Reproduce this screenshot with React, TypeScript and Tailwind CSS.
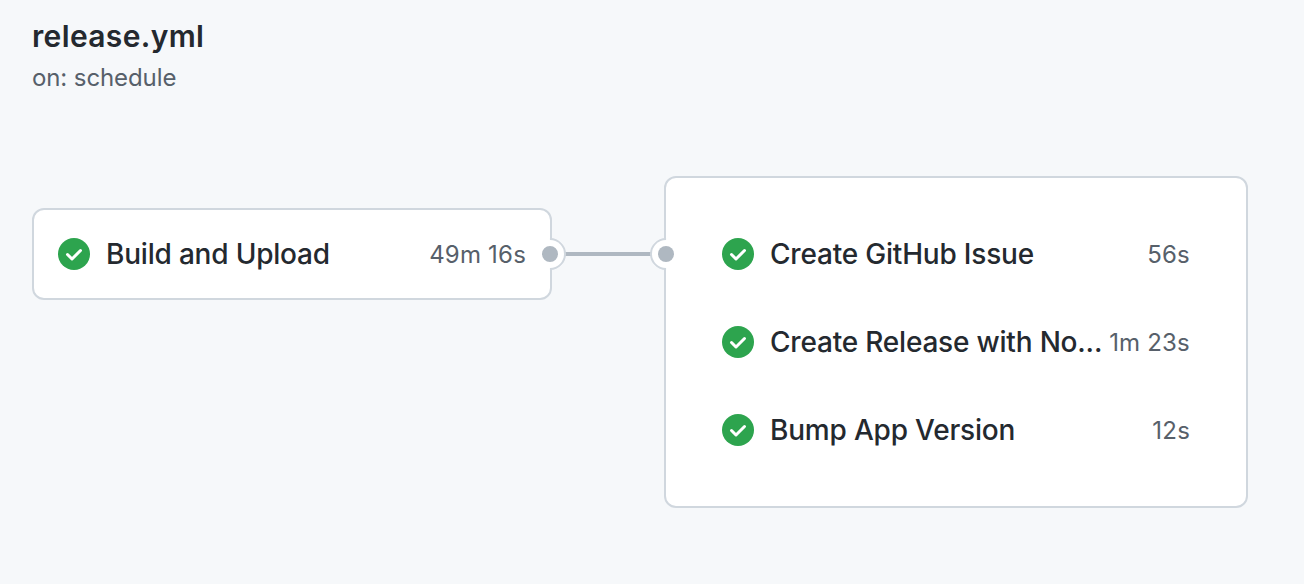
import React from 'react';

const Check = () => (
  <svg viewBox="0 0 32 32" className="w-8 h-8 shrink-0">
    <circle cx="16" cy="16" r="16" fill="#2da44e" />
    <path d="M9.5 16.5l4.5 4.5 8.5-8.5" fill="none" stroke="#fff" strokeWidth="3" strokeLinecap="round" strokeLinejoin="round" />
  </svg>
);

const Job = ({ name, time }: { name: string; time: string }) => (
  <div className="flex items-center justify-between h-12">
    <div className="flex items-center min-w-0">
      <Check />
      <span className="ml-4 whitespace-nowrap text-[28px] font-medium tracking-[-0.2px] text-[#24292f]">{name}</span>
    </div>
    <span className="shrink-0 mt-0.5 text-2xl tracking-[0.2px] text-[#57606a]">{time}</span>
  </div>
);

const OutPort = () => (
  <div className="absolute -right-4 top-[28px] z-10 w-8 h-8 rotate-45 rounded-full bg-white border-2 border-transparent border-t-[#d0d7de] border-r-[#d0d7de] flex items-center justify-center">
    <div className="w-4 h-4 rounded-full bg-[#afb8c1]" />
  </div>
);

const InPort = () => (
  <div className="absolute -left-4 top-[60px] z-10 w-8 h-8 rotate-45 rounded-full bg-white border-2 border-transparent border-b-[#d0d7de] border-l-[#d0d7de] flex items-center justify-center">
    <div className="w-4 h-4 rounded-full bg-[#afb8c1]" />
  </div>
);

const App: React.FC = () => {
  return (
    <div className="w-[1304px] h-[584px] bg-[#f6f8fa] px-8 pt-[14px] overflow-hidden font-['Inter',sans-serif]">
      <h1 className="text-[30px] leading-[44px] font-semibold text-[#24292f] tracking-[0.35px]">release.yml</h1>
      <p className="mt-1 text-2xl leading-8 tracking-[-0.1px] text-[#57606a]">on: schedule</p>
      <div className="mt-[82px] flex items-start">
        <div className="relative mt-8 w-[520px] h-[92px] bg-white border-2 border-[#d0d7de] rounded-xl px-6 flex items-center">
          <div className="flex-1 min-w-0">
            <Job name="Build and Upload" time="49m 16s" />
          </div>
          <OutPort />
        </div>
        <div className="mt-[76px] w-[112px] h-1 bg-[#afb8c1]" />
        <div className="relative w-[584px] h-[332px] bg-white border-2 border-[#d0d7de] rounded-xl px-14 flex flex-col justify-center gap-10">
          <Job name="Create GitHub Issue" time="56s" />
          <Job name="Create Release with No..." time="1m 23s" />
          <Job name="Bump App Version" time="12s" />
          <InPort />
        </div>
      </div>
    </div>
  );
};

export default App;
